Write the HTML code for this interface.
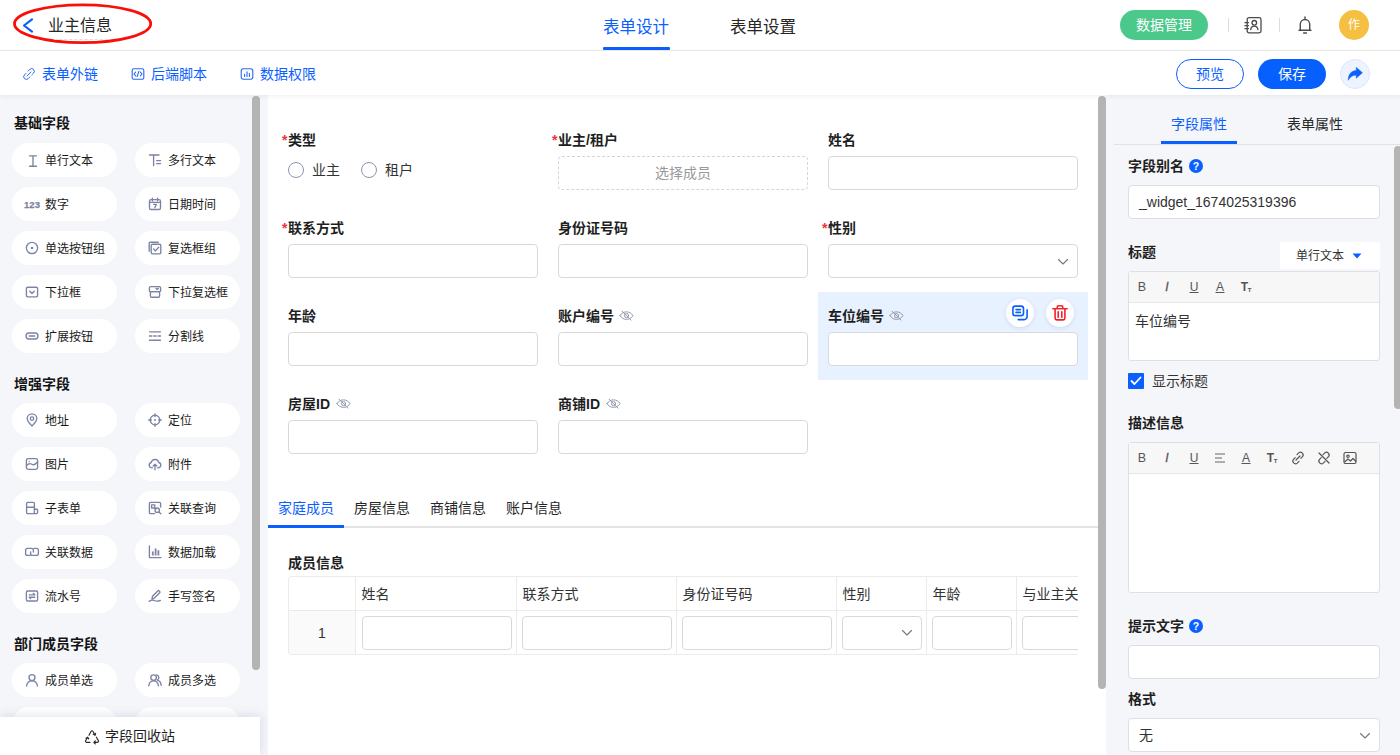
<!DOCTYPE html>
<html lang="zh-CN">
<head>
<meta charset="utf-8">
<title>业主信息 - 表单设计</title>
<style>
*{box-sizing:border-box;margin:0;padding:0}
html,body{width:1400px;height:755px;overflow:hidden;background:#fff}
body{font-family:"Liberation Sans","Noto Sans CJK SC",sans-serif;font-size:14px;color:#1f1f1f;position:relative}
.abs{position:absolute}
svg{display:block;overflow:visible}
/* header */
#hdr{position:absolute;left:0;top:0;width:1400px;height:51px;background:#fff;border-bottom:1px solid #ececec}
#sub{position:absolute;left:0;top:51px;width:1400px;height:44px;background:#fff;z-index:5;box-shadow:0 1px 5px rgba(0,0,0,.07)}
.t{position:absolute;white-space:nowrap;line-height:20px;height:20px}
.blue{color:#0b5fff}
/* left */
#left{position:absolute;left:0;top:95px;width:268px;height:660px;background:#f5f6fa;overflow:hidden}
.sec{position:absolute;left:14px;margin-top:0.8px;font-weight:bold;font-size:14px;line-height:20px;color:#141414}
.pill{position:absolute;width:105px;height:34px;border-radius:17px;background:#fff;font-size:12px;line-height:34px;color:#1a1a1a;white-space:nowrap}
.pill span{position:absolute;left:33px;top:1px}
.pill svg{position:absolute;left:13px;top:10px}
.c1{left:12px}.c2{left:135px}
.thumb{position:absolute;width:8px;background:#b4b4b4;border-radius:4px}
/* canvas */
#cv{position:absolute;left:268px;top:95px;width:838px;height:660px;background:#fff;overflow:hidden}
.lbl{position:absolute;font-weight:bold;font-size:14px;line-height:20px;height:20px;white-space:nowrap;color:#1f1f1f}
.req{position:absolute;color:#e8323c;font-size:14px;line-height:20px;font-weight:bold}
.inp{position:absolute;height:34px;width:250px;border:1px solid #d9d9d9;border-radius:4px;background:#fff}
/* right */
#right{position:absolute;left:1106px;top:95px;width:294px;height:660px;background:#f5f6fa;overflow:hidden}
</style>
</head>
<body>
<div id="hdr">
<svg class="abs" style="left:0;top:0" width="200" height="50"><polyline points="32,19.4 24,25.5 32,31.6" fill="none" stroke="#0b5fff" stroke-width="2.2" stroke-linecap="round" stroke-linejoin="round"/><ellipse cx="82.6" cy="23.7" rx="68.1" ry="18.9" fill="none" stroke="#f90f0a" stroke-width="2.8"/></svg>
<div class="abs" style="left:54px;top:39px;width:54px;height:0;border-top:1px dashed #dedede"></div>
<div class="t" style="left:48px;top:16px;font-size:16px;color:#262626">业主信息</div>
<div class="t blue" style="left:603px;top:16.5px;font-size:16.5px">表单设计</div>
<div class="abs" style="left:603px;top:47px;width:67px;height:3px;background:#0b5fff;border-radius:1px"></div>
<div class="t" style="left:730px;top:16.5px;font-size:16.5px;color:#262626">表单设置</div>
<div class="abs" style="left:1120px;top:10px;width:88px;height:30px;border-radius:15px;background:#4bc98b;color:#fff;font-size:14px;line-height:30px;text-align:center">数据管理</div>
<div class="abs" style="left:1228px;top:18px;width:1px;height:14px;background:#dcdcdc"></div>
<div class="abs" style="left:1279px;top:18px;width:1px;height:14px;background:#dcdcdc"></div>
<svg class="abs" style="left:1244px;top:16px" width="20" height="20" viewBox="0 0 20 20" fill="none" stroke="#4d4a4a" stroke-width="1.3" stroke-linecap="round" stroke-linejoin="round"><rect x="3.2" y="1.7" width="13.8" height="15.2" rx="1.8"/><path d="M1 6.7h3.4M1 9.7h3.4M1 12.7h3.4"/><circle cx="10.3" cy="6.8" r="2.3"/><path d="M6.7 13.7c.3-2.3 1.7-3.5 3.6-3.5s3.3 1.2 3.6 3.5"/></svg>
<svg class="abs" style="left:1295px;top:15px" width="20" height="20" viewBox="0 0 20 20" fill="none" stroke="#4d4a4a" stroke-width="1.4" stroke-linecap="round" stroke-linejoin="round"><path d="M4 15.2h12M5.3 15V9.2a4.7 4.7 0 0 1 9.4 0V15M10 2v2.3M8.6 18h2.8"/></svg>
<div class="abs" style="left:1339px;top:10px;width:30px;height:30px;border-radius:15px;background:#f5bf42;color:#fff;font-size:12px;line-height:30px;text-align:center">作</div>
</div>
<div id="sub">
<svg class="abs" style="left:22px;top:16px" width="14" height="14" viewBox="0 0 14 14" fill="none" stroke="#2468f2" stroke-width="1" stroke-linecap="round"><path d="M6.1 4.1l1.7-1.7a2.6 2.6 0 0 1 3.7 3.7L9.8 7.8M7.9 9.9l-1.7 1.7a2.6 2.6 0 0 1-3.7-3.7l1.7-1.7M5 9l4-4"/></svg>
<div class="t blue" style="left:42px;top:13px">表单外链</div>
<svg class="abs" style="left:131px;top:16px" width="14" height="14" viewBox="0 0 14 14" fill="none" stroke="#2468f2" stroke-width="1.1" stroke-linejoin="round" stroke-linecap="round"><rect x="1.2" y="1.7" width="11.6" height="10.6" rx="1.5"/><path d="M4.6 5.2L3 7l1.6 1.8M9.4 5.2L11 7 9.4 8.8M7.9 4.3L6.1 9.7"/></svg>
<div class="t blue" style="left:151px;top:13px">后端脚本</div>
<svg class="abs" style="left:240px;top:16px" width="14" height="14" viewBox="0 0 14 14" fill="none" stroke="#2468f2" stroke-width="1.1" stroke-linejoin="round" stroke-linecap="round"><rect x="1.2" y="1.7" width="11.6" height="10.6" rx="2.2"/><path d="M4.6 9.5V7.3M7 9.5V4.8M9.4 9.5V6.2"/></svg>
<div class="t blue" style="left:260px;top:13px">数据权限</div>
<div class="abs" style="left:1176px;top:8px;width:68px;height:30px;border-radius:15px;border:1px solid #0b5fff;color:#0b5fff;font-size:14px;line-height:28px;text-align:center;background:#fff">预览</div>
<div class="abs" style="left:1258px;top:8px;width:68px;height:30px;border-radius:15px;background:#0560fd;color:#fff;font-size:14px;line-height:30px;text-align:center">保存</div>
<div class="abs" style="left:1340px;top:8px;width:30px;height:30px;border-radius:15px;background:#edf3ff;border:1px solid #dbe6fd"></div>
<svg class="abs" style="left:1347px;top:16px" width="16" height="14" viewBox="0 0 16 14"><path d="M9.2 .3l6.3 5.5-6.3 5.5V8.2C5.8 8.1 3.3 9.6 1.3 13.3 1.1 7.2 4.3 3.7 9.2 3.4z" fill="#0b5fff" stroke="#0b5fff" stroke-width=".4" stroke-linejoin="round"/></svg>
</div>
<div id="left">
<div class="sec" style="top:17px">基础字段</div>
<div class="pill c1" style="top:48px"><svg width="14" height="14" viewBox="0 0 14 14" fill="none" stroke="#7c83a3" stroke-width="1.35" stroke-linecap="round" stroke-linejoin="round" style="left:14px;top:11px"><path d="M3.5 1.8h7M3.5 12.2h7M7 1.8v10.4"/></svg><span>单行文本</span></div>
<div class="pill c2" style="top:48px"><svg width="14" height="14" viewBox="0 0 14 14" fill="none" stroke="#7c83a3" stroke-width="1.35" stroke-linecap="round" stroke-linejoin="round"><path d="M1.5 2h9.5M5.6 2v10.5M8.6 7.6h4M8.6 10.6h4"/></svg><span>多行文本</span></div>
<div class="pill c1" style="top:92px"><svg width="18" height="14" viewBox="0 0 18 14" style="left:10.5px;top:10.5px"><text x="9" y="10.3" text-anchor="middle" font-family="Liberation Sans, sans-serif" font-weight="bold" font-size="9.5" fill="#7c83a3" stroke="#7c83a3" stroke-width="0.25">123</text></svg><span>数字</span></div>
<div class="pill c2" style="top:92px"><svg width="14" height="14" viewBox="0 0 14 14" fill="none" stroke="#7c83a3" stroke-width="1.35" stroke-linecap="round" stroke-linejoin="round"><rect x="1.5" y="2.6" width="11" height="9.9" rx="1.6"/><path d="M4.4 1.2v2.6M9.6 1.2v2.6M1.5 5.3h11M5.6 7.3h2.8l-1.6 3.4"/></svg><span>日期时间</span></div>
<div class="pill c1" style="top:136px"><svg width="14" height="14" viewBox="0 0 14 14" fill="none" stroke="#7c83a3" stroke-width="1.35" stroke-linecap="round" stroke-linejoin="round"><circle cx="7" cy="7" r="5.6"/><circle cx="7" cy="7" r="1.3" fill="#7c83a3" stroke="none"/></svg><span>单选按钮组</span></div>
<div class="pill c2" style="top:136px"><svg width="14" height="14" viewBox="0 0 14 14" fill="none" stroke="#7c83a3" stroke-width="1.35" stroke-linecap="round" stroke-linejoin="round"><rect x="3.2" y="3.2" width="9.6" height="9.6" rx="1.2"/><path d="M1.2 10.2V2.2a1 1 0 0 1 1-1h8M5.6 8l1.9 1.9 3.2-3.7"/></svg><span>复选框组</span></div>
<div class="pill c1" style="top:180px"><svg width="14" height="14" viewBox="0 0 14 14" fill="none" stroke="#7c83a3" stroke-width="1.35" stroke-linecap="round" stroke-linejoin="round"><rect x="1.4" y="2.2" width="11.2" height="9.6" rx="1.4"/><path d="M4.8 6.2L7 8.4l2.2-2.2"/></svg><span>下拉框</span></div>
<div class="pill c2" style="top:180px"><svg width="14" height="14" viewBox="0 0 14 14" fill="none" stroke="#7c83a3" stroke-width="1.35" stroke-linecap="round" stroke-linejoin="round"><rect x="1.4" y="1.6" width="11.2" height="5" rx="1.2"/><rect x="2.4" y="6.6" width="9.2" height="5.6" rx="1.2"/><path d="M8 3.2l1.2 1.2 1.2-1.2"/></svg><span>下拉复选框</span></div>
<div class="pill c1" style="top:224px"><svg width="14" height="14" viewBox="0 0 14 14" fill="none" stroke="#7c83a3" stroke-width="1.35" stroke-linecap="round" stroke-linejoin="round"><rect x="1" y="4" width="12" height="6" rx="3"/><path d="M4.2 7h5.6"/></svg><span>扩展按钮</span></div>
<div class="pill c2" style="top:224px"><svg width="14" height="14" viewBox="0 0 14 14" fill="none" stroke="#7c83a3" stroke-width="1.35" stroke-linecap="round" stroke-linejoin="round"><path d="M1.5 2.8h11M1.5 11.2h11M1.5 7h2.4M5.8 7h2.4M10.1 7h2.4"/></svg><span>分割线</span></div>
<div class="sec" style="top:277.9px">增强字段</div>
<div class="pill c1" style="top:308px"><svg width="14" height="14" viewBox="0 0 14 14" fill="none" stroke="#7c83a3" stroke-width="1.35" stroke-linecap="round" stroke-linejoin="round"><path d="M7 13C4.2 10.3 2.2 8 2.2 5.6a4.8 4.8 0 0 1 9.6 0C11.8 8 9.8 10.3 7 13z"/><circle cx="7" cy="5.6" r="1.7"/></svg><span>地址</span></div>
<div class="pill c2" style="top:308px"><svg width="14" height="14" viewBox="0 0 14 14" fill="none" stroke="#7c83a3" stroke-width="1.35" stroke-linecap="round" stroke-linejoin="round"><circle cx="7" cy="7" r="4.8"/><path d="M7 .8v2.6M7 10.6v2.6M.8 7h2.6M10.6 7h2.6"/><circle cx="7" cy="7" r="1" fill="#7c83a3" stroke="none"/></svg><span>定位</span></div>
<div class="pill c1" style="top:352px"><svg width="14" height="14" viewBox="0 0 14 14" fill="none" stroke="#7c83a3" stroke-width="1.35" stroke-linecap="round" stroke-linejoin="round"><rect x="1.4" y="1.6" width="11.2" height="10.8" rx="1.8"/><path d="M1.6 8.6c2-2.4 3.6-2.4 5.2-1.4s3.6.4 5.6-2.2M4.2 4.6h.1"/></svg><span>图片</span></div>
<div class="pill c2" style="top:352px"><svg width="14" height="14" viewBox="0 0 14 14" fill="none" stroke="#7c83a3" stroke-width="1.35" stroke-linecap="round" stroke-linejoin="round"><path d="M4.4 10.8H3.6A2.7 2.7 0 0 1 3.2 5.5a3.9 3.9 0 0 1 7.6 0 2.7 2.7 0 0 1-.4 5.3H9.6M7 12.8V7.4M5.2 9.1L7 7.3l1.8 1.8"/></svg><span>附件</span></div>
<div class="pill c1" style="top:396px"><svg width="14" height="14" viewBox="0 0 14 14" fill="none" stroke="#7c83a3" stroke-width="1.35" stroke-linecap="round" stroke-linejoin="round"><rect x="1.6" y="1.4" width="7.8" height="11.2" rx="1.2"/><path d="M1.6 6.2h7.8M9.4 8.2h2.2a1 1 0 0 1 1 1v2.4a1 1 0 0 1-1 1H9.4"/></svg><span>子表单</span></div>
<div class="pill c2" style="top:396px"><svg width="14" height="14" viewBox="0 0 14 14" fill="none" stroke="#7c83a3" stroke-width="1.35" stroke-linecap="round" stroke-linejoin="round"><path d="M12.6 6V2.6a1.2 1.2 0 0 0-1.2-1.2H2.6a1.2 1.2 0 0 0-1.2 1.2v8.8a1.2 1.2 0 0 0 1.2 1.2h4"/><rect x="3.6" y="3.8" width="3.2" height="3.2"/><circle cx="9.2" cy="9.2" r="2.2"/><path d="M10.9 10.9l1.9 1.9M6.8 7l1 1"/></svg><span>关联查询</span></div>
<div class="pill c1" style="top:440px"><svg width="14" height="14" viewBox="0 0 14 14" fill="none" stroke="#7c83a3" stroke-width="1.35" stroke-linecap="round" stroke-linejoin="round"><path d="M8.4 7V5.4a2 2 0 0 0-2-2H2.6a2 2 0 0 0-2 2v3a2 2 0 0 0 2 2H5"/><path d="M5.6 6.8v1.6a2 2 0 0 0 2 2h3.8a2 2 0 0 0 2-2v-3a2 2 0 0 0-2-2H9"/></svg><span>关联数据</span></div>
<div class="pill c2" style="top:440px"><svg width="14" height="14" viewBox="0 0 14 14" fill="none" stroke="#7c83a3" stroke-width="1.35" stroke-linecap="round" stroke-linejoin="round"><path d="M1.4 1v11.6h11.6"/><path d="M4.8 10.4V6.6M7.6 10.4V3.4M10.4 10.4V5.2" stroke-width="1.8" stroke-linecap="butt"/></svg><span>数据加载</span></div>
<div class="pill c1" style="top:484px"><svg width="14" height="14" viewBox="0 0 14 14" fill="none" stroke="#7c83a3" stroke-width="1.35" stroke-linecap="round" stroke-linejoin="round"><rect x="1.4" y="2" width="11.2" height="10" rx="1.2"/><path d="M4.2 5.8h5.6l-1.4-1.4M9.8 8.2H4.2l1.4 1.4"/></svg><span>流水号</span></div>
<div class="pill c2" style="top:484px"><svg width="14" height="14" viewBox="0 0 14 14" fill="none" stroke="#7c83a3" stroke-width="1.35" stroke-linecap="round" stroke-linejoin="round"><path d="M4 9.6l.5-2.4 5.3-5.3a1 1 0 0 1 1.4 0l.5.5a1 1 0 0 1 0 1.4L6.4 9.1zM1.2 12.4c2-1.6 3.4-1.8 5-.9s3.6 1 6.2-.1"/></svg><span>手写签名</span></div>
<div class="sec" style="top:538px">部门成员字段</div>
<div class="pill c1" style="top:568px"><svg width="14" height="14" viewBox="0 0 14 14" fill="none" stroke="#7c83a3" stroke-width="1.35" stroke-linecap="round" stroke-linejoin="round"><circle cx="7" cy="4.6" r="3"/><path d="M1.6 13c.3-3.2 2.4-5.2 5.4-5.2s5.1 2 5.4 5.2"/></svg><span>成员单选</span></div>
<div class="pill c2" style="top:568px"><svg width="14" height="14" viewBox="0 0 14 14" fill="none" stroke="#7c83a3" stroke-width="1.35" stroke-linecap="round" stroke-linejoin="round"><circle cx="5.6" cy="4.6" r="2.8"/><path d="M.8 12.8c.3-3 2.1-5 4.8-5s4.5 2 4.8 5M8.6 1.9a2.8 2.8 0 0 1 .6 5.3c2.2.4 3.7 2.2 4 5.2"/></svg><span>成员多选</span></div>
<div class="pill c1" style="top:612px"></div>
<div class="pill c2" style="top:612px"></div>
<div class="thumb" style="left:252px;top:1px;height:574px"></div>
<div class="abs" id="recycle" style="left:0;top:622px;width:260px;height:38px;background:#fff;box-shadow:0 -3px 10px rgba(40,50,90,.08),3px 0 8px rgba(40,50,90,.05)"><svg class="abs" style="left:84px;top:11.5px" width="16" height="15" viewBox="0 0 16 15" fill="none" stroke="#2b2b2b" stroke-width="1.2" stroke-linecap="round" stroke-linejoin="round"><path d="M5 6.2L7.1 2.3a1 1 0 0 1 1.8 0L11 6.2M12.4 8.2l2 3.6a1 1 0 0 1-.9 1.5H10M6 13.3H2.5a1 1 0 0 1-.9-1.5l2-3.6M9.3 5.3l1.8 1 .5-2M11.3 11.8L9.8 13.3l1.5 1.5M2 9.2l1.7-1 1 1.7"/></svg><div class="t" style="left:105px;top:9px;font-size:14px;color:#1f1f1f">字段回收站</div></div>
</div>
<div id="cv">
<div class="abs" style="left:550px;top:197px;width:270px;height:88px;background:#e8f1ff"></div>
<div class="req" style="left:14px;top:35px">*</div>
<div class="lbl" style="left:20px;top:35px">类型</div>
<div class="abs" style="left:20px;top:67px;width:16px;height:16px;border-radius:8px;border:1px solid #8f93ab;background:#fff"></div>
<div class="t" style="left:44px;top:65px;font-size:14px;color:#333">业主</div>
<div class="abs" style="left:93px;top:67px;width:16px;height:16px;border-radius:8px;border:1px solid #8f93ab;background:#fff"></div>
<div class="t" style="left:117px;top:65px;font-size:14px;color:#333">租户</div>
<div class="req" style="left:284px;top:35px">*</div>
<div class="lbl" style="left:290px;top:35px">业主/租户</div>
<div class="abs" style="left:290px;top:61px;width:250px;height:34px;border:1px dashed #d6d6d6;border-radius:4px;color:#999;font-size:14px;line-height:32px;text-align:center">选择成员</div>
<div class="lbl" style="left:560px;top:35px">姓名</div>
<div class="inp" style="left:560px;top:61px"></div>
<div class="req" style="left:14px;top:123px">*</div>
<div class="lbl" style="left:20px;top:123px">联系方式</div>
<div class="inp" style="left:20px;top:149px"></div>
<div class="lbl" style="left:290px;top:123px">身份证号码</div>
<div class="inp" style="left:290px;top:149px"></div>
<div class="req" style="left:554px;top:123px">*</div>
<div class="lbl" style="left:560px;top:123px">性别</div>
<div class="inp" style="left:560px;top:149px"><svg class="abs" style="left:228px;top:13px" width="12" height="8" viewBox="0 0 12 8" fill="none" stroke="#7a7a7a" stroke-width="1.15" stroke-linecap="round" stroke-linejoin="round"><path d="M1.5 1.5L6 6l4.5-4.5"/></svg></div>
<div class="lbl" style="left:20px;top:211px">年龄</div>
<div class="inp" style="left:20px;top:237px"></div>
<div class="lbl" style="left:290px;top:211px">账户编号</div>
<svg class="abs" style="left:350.5px;top:215px" width="15" height="11.25" viewBox="0 0 16 12" fill="none" stroke="#9196aa" stroke-width="1.05" stroke-linecap="round"><path d="M1 6c1.8-2.7 4.2-4 7-4s5.2 1.3 7 4c-1.8 2.7-4.2 4-7 4S2.8 8.7 1 6z"/><circle cx="8" cy="6" r="2.2"/><path d="M3.2 1.2l9.6 9.6"/></svg>
<div class="inp" style="left:290px;top:237px"></div>
<div class="lbl" style="left:560px;top:211px">车位编号</div>
<svg class="abs" style="left:620.5px;top:215px" width="15" height="11.25" viewBox="0 0 16 12" fill="none" stroke="#9196aa" stroke-width="1.05" stroke-linecap="round"><path d="M1 6c1.8-2.7 4.2-4 7-4s5.2 1.3 7 4c-1.8 2.7-4.2 4-7 4S2.8 8.7 1 6z"/><circle cx="8" cy="6" r="2.2"/><path d="M3.2 1.2l9.6 9.6"/></svg>
<div class="inp" style="left:560px;top:237px"></div>
<div class="lbl" style="left:20px;top:299px">房屋ID</div>
<svg class="abs" style="left:67.5px;top:303px" width="15" height="11.25" viewBox="0 0 16 12" fill="none" stroke="#9196aa" stroke-width="1.05" stroke-linecap="round"><path d="M1 6c1.8-2.7 4.2-4 7-4s5.2 1.3 7 4c-1.8 2.7-4.2 4-7 4S2.8 8.7 1 6z"/><circle cx="8" cy="6" r="2.2"/><path d="M3.2 1.2l9.6 9.6"/></svg>
<div class="inp" style="left:20px;top:325px"></div>
<div class="lbl" style="left:290px;top:299px">商铺ID</div>
<svg class="abs" style="left:337.5px;top:303px" width="15" height="11.25" viewBox="0 0 16 12" fill="none" stroke="#9196aa" stroke-width="1.05" stroke-linecap="round"><path d="M1 6c1.8-2.7 4.2-4 7-4s5.2 1.3 7 4c-1.8 2.7-4.2 4-7 4S2.8 8.7 1 6z"/><circle cx="8" cy="6" r="2.2"/><path d="M3.2 1.2l9.6 9.6"/></svg>
<div class="inp" style="left:290px;top:325px"></div>
<div class="abs" style="left:738px;top:204px;width:28px;height:28px;border-radius:14px;background:#fff;box-shadow:0 1px 4px rgba(30,60,140,.12)"><svg class="abs" style="left:6px;top:6px" width="16" height="16" viewBox="0 0 16 16" fill="none" stroke="#0b5fff" stroke-width="1.6" stroke-linecap="round" stroke-linejoin="round"><rect x="0.9" y="1.1" width="10.6" height="9.5" rx="2.4"/><path d="M4 4.6h4.4M4 7.4h4.4M15.1 4.8v6.8a3 3 0 0 1-3 3H6.2"/></svg></div>
<div class="abs" style="left:778px;top:204px;width:28px;height:28px;border-radius:14px;background:#fff;box-shadow:0 1px 4px rgba(30,60,140,.12)"><svg class="abs" style="left:6px;top:6px" width="16" height="16" viewBox="0 0 16 16" fill="none" stroke="#f5222d" stroke-width="1.6" stroke-linecap="round" stroke-linejoin="round"><path d="M0.9 3.7h14.2M5.2 3.5V2.2a1.4 1.4 0 0 1 1.4-1.4h2.8a1.4 1.4 0 0 1 1.4 1.4v1.3M3.1 3.9v9.2a1.8 1.8 0 0 0 1.8 1.8h6.2a1.8 1.8 0 0 0 1.8-1.8V3.9M6.2 6.8v5.4M9.8 6.8v5.4"/></svg></div>
<div class="t blue" style="left:10px;top:403px;font-size:14px;">家庭成员</div>
<div class="t" style="left:86px;top:403px;font-size:14px;color:#262626">房屋信息</div>
<div class="t" style="left:162px;top:403px;font-size:14px;color:#262626">商铺信息</div>
<div class="t" style="left:238px;top:403px;font-size:14px;color:#262626">账户信息</div>
<div class="abs" style="left:0;top:431px;width:830px;height:2px;background:#e4e4e4"></div>
<div class="abs" style="left:0;top:430px;width:76px;height:3px;background:#0b5fff"></div>
<div class="lbl" style="left:20px;top:458px">成员信息</div>
<div class="abs" id="tbl" style="border-radius:4px 0 0 4px;left:20px;top:481px;width:790px;height:79px;overflow:hidden;border-top:1px solid #ebebeb;border-left:1px solid #ebebeb;border-bottom:1px solid #ebebeb">
<div class="abs" style="left:0px;top:0;width:67px;height:34px;border-right:1px solid #ebebeb;border-bottom:1px solid #ebebeb;font-size:14px;line-height:34px;padding-left:5.5px;color:#333;white-space:nowrap;overflow:hidden"></div>
<div class="abs" style="left:0px;top:34px;width:67px;height:44px;border-right:1px solid #ebebeb;background:#fafafa;font-size:14px;line-height:44px;text-align:center;color:#333">1</div>
<div class="abs" style="left:67px;top:0;width:161px;height:34px;border-right:1px solid #ebebeb;border-bottom:1px solid #ebebeb;font-size:14px;line-height:34px;padding-left:5.5px;color:#333;white-space:nowrap;overflow:hidden">姓名</div>
<div class="abs" style="left:67px;top:34px;width:161px;height:44px;border-right:1px solid #ebebeb"><div class="inp" style="left:6px;top:5px;width:150px;height:34px"></div></div>
<div class="abs" style="left:228px;top:0;width:160px;height:34px;border-right:1px solid #ebebeb;border-bottom:1px solid #ebebeb;font-size:14px;line-height:34px;padding-left:5.5px;color:#333;white-space:nowrap;overflow:hidden">联系方式</div>
<div class="abs" style="left:228px;top:34px;width:160px;height:44px;border-right:1px solid #ebebeb"><div class="inp" style="left:5px;top:5px;width:150px;height:34px"></div></div>
<div class="abs" style="left:388px;top:0;width:160px;height:34px;border-right:1px solid #ebebeb;border-bottom:1px solid #ebebeb;font-size:14px;line-height:34px;padding-left:5.5px;color:#333;white-space:nowrap;overflow:hidden">身份证号码</div>
<div class="abs" style="left:388px;top:34px;width:160px;height:44px;border-right:1px solid #ebebeb"><div class="inp" style="left:5px;top:5px;width:150px;height:34px"></div></div>
<div class="abs" style="left:548px;top:0;width:90px;height:34px;border-right:1px solid #ebebeb;border-bottom:1px solid #ebebeb;font-size:14px;line-height:34px;padding-left:5.5px;color:#333;white-space:nowrap;overflow:hidden">性别</div>
<div class="abs" style="left:548px;top:34px;width:90px;height:44px;border-right:1px solid #ebebeb"><div class="inp" style="left:5px;top:5px;width:80px;height:34px"><svg class="abs" style="left:58px;top:12px" width="12" height="8" viewBox="0 0 12 8" fill="none" stroke="#7a7a7a" stroke-width="1.15" stroke-linecap="round" stroke-linejoin="round"><path d="M1.5 1.5L6 6l4.5-4.500"/></svg></div></div>
<div class="abs" style="left:638px;top:0;width:90px;height:34px;border-right:1px solid #ebebeb;border-bottom:1px solid #ebebeb;font-size:14px;line-height:34px;padding-left:5.5px;color:#333;white-space:nowrap;overflow:hidden">年龄</div>
<div class="abs" style="left:638px;top:34px;width:90px;height:44px;border-right:1px solid #ebebeb"><div class="inp" style="left:5px;top:5px;width:80px;height:34px"></div></div>
<div class="abs" style="left:728px;top:0;width:120px;height:34px;border-right:1px solid #ebebeb;border-bottom:1px solid #ebebeb;font-size:14px;line-height:34px;padding-left:5.5px;color:#333;white-space:nowrap;overflow:hidden">与业主关系</div>
<div class="abs" style="left:728px;top:34px;width:120px;height:44px;border-right:1px solid #ebebeb"><div class="inp" style="left:5px;top:5px;width:110px;height:34px"></div></div>
</div>
<div class="thumb" style="left:830px;top:1px;height:593px"></div>
</div>
<div id="right">
<div class="t blue" style="left:65px;top:19px;font-size:14px">字段属性</div>
<div class="t" style="left:181px;top:19px;font-size:14px;color:#262626">表单属性</div>
<div class="abs" style="left:8px;top:49px;width:290px;height:1px;background:#e2e2e2"></div>
<div class="abs" style="left:55px;top:46px;width:76px;height:3px;background:#0b5fff"></div>
<div class="lbl" style="left:22px;top:61px">字段别名</div>
<svg class="abs" style="left:83px;top:64px" width="14" height="14" viewBox="0 0 14 14"><circle cx="7" cy="7" r="7" fill="#0b5fff"/><text x="7" y="10.6" text-anchor="middle" font-family="Liberation Sans, sans-serif" font-weight="bold" font-size="10.5" fill="#fff">?</text></svg>
<div class="inp" style="left:22px;top:90px;width:252px;height:34px;font-size:14px;line-height:32px;padding-left:10px;color:#333;border-color:#dcdfe6">_widget_1674025319396</div>
<div class="lbl" style="left:22px;top:147px">标题</div>
<div class="abs" style="left:174px;top:147px;width:100px;height:27px;background:#fff;border-radius:2px;font-size:12px;line-height:29px;color:#333;padding-left:16px">单行文本<svg class="abs" style="left:72px;top:11px" width="10" height="6" viewBox="0 0 10 6"><path d="M0.5 0.5h9L5 5.5z" fill="#0b5fff"/></svg></div>
<div class="abs" style="left:22px;top:176px;width:252px;height:90px;border:1px solid #dcdfe6;border-radius:3px;background:#fff"><div class="abs" style="left:0;top:0;width:250px;height:31px;background:#f7f7f7;border-bottom:1px solid #e6e6e6"></div><div class="t" style="left:6px;top:39px;font-size:14px;color:#333">车位编号</div></div>
<svg class="abs" style="left:28px;top:184px" width="16" height="16" viewBox="0 0 16 16"><text x="8" y="12" text-anchor="middle" font-family="Liberation Sans, sans-serif" font-size="12.5" fill="#555">B</text></svg>
<svg class="abs" style="left:53px;top:184px" width="16" height="16" viewBox="0 0 16 16"><text x="8" y="12" text-anchor="middle" font-family="Liberation Sans, sans-serif" font-style="italic" font-size="12" fill="#555" stroke="#555" stroke-width=".3">I</text></svg>
<svg class="abs" style="left:80px;top:184px" width="16" height="16" viewBox="0 0 16 16"><text x="8" y="11.5" text-anchor="middle" font-family="Liberation Sans, sans-serif" font-size="12" fill="#555">U</text><path d="M3.5 13.5h9" stroke="#555" stroke-width="1"/></svg>
<svg class="abs" style="left:106px;top:184px" width="16" height="16" viewBox="0 0 16 16"><text x="8" y="11.5" text-anchor="middle" font-family="Liberation Sans, sans-serif" font-size="12" fill="#555">A</text><path d="M3.5 13.5h9" stroke="#555" stroke-width="1"/></svg>
<svg class="abs" style="left:132px;top:184px" width="16" height="16" viewBox="0 0 16 16"><text x="6.5" y="12" text-anchor="middle" font-family="Liberation Sans, sans-serif" font-weight="bold" font-size="12" fill="#555">T</text><text x="11.6" y="12.5" text-anchor="middle" font-family="Liberation Sans, sans-serif" font-weight="bold" font-size="6" fill="#555">T</text></svg>
<div class="abs" style="left:22px;top:278px;width:16px;height:16px;border-radius:1px;background:#0b5fff"><svg class="abs" style="left:2px;top:3px" width="12" height="10" viewBox="0 0 12 10" fill="none" stroke="#fff" stroke-width="1.8" stroke-linecap="round" stroke-linejoin="round"><path d="M1.5 5l3 3 6-6.5"/></svg></div>
<div class="t" style="left:46px;top:276px;font-size:14px;color:#333">显示标题</div>
<div class="lbl" style="left:22px;top:318px">描述信息</div>
<div class="abs" style="left:22px;top:347px;width:252px;height:151px;border:1px solid #dcdfe6;border-radius:3px;background:#fff"><div class="abs" style="left:0;top:0;width:250px;height:31px;background:#f7f7f7;border-bottom:1px solid #e6e6e6"></div></div>
<svg class="abs" style="left:28px;top:355px" width="16" height="16" viewBox="0 0 16 16"><text x="8" y="12" text-anchor="middle" font-family="Liberation Sans, sans-serif" font-size="12.5" fill="#555">B</text></svg>
<svg class="abs" style="left:53px;top:355px" width="16" height="16" viewBox="0 0 16 16"><text x="8" y="12" text-anchor="middle" font-family="Liberation Sans, sans-serif" font-style="italic" font-size="12" fill="#555" stroke="#555" stroke-width=".3">I</text></svg>
<svg class="abs" style="left:80px;top:355px" width="16" height="16" viewBox="0 0 16 16"><text x="8" y="11.5" text-anchor="middle" font-family="Liberation Sans, sans-serif" font-size="12" fill="#555">U</text><path d="M3.5 13.5h9" stroke="#555" stroke-width="1"/></svg>
<svg class="abs" style="left:106px;top:355px" width="16" height="16" viewBox="0 0 16 16"><path d="M3 4h10M3 8h7M3 12h10" stroke="#666" stroke-width="1.1" fill="none"/></svg>
<svg class="abs" style="left:132px;top:355px" width="16" height="16" viewBox="0 0 16 16"><text x="8" y="11.5" text-anchor="middle" font-family="Liberation Sans, sans-serif" font-size="12" fill="#555">A</text><path d="M3.5 13.5h9" stroke="#555" stroke-width="1"/></svg>
<svg class="abs" style="left:158px;top:355px" width="16" height="16" viewBox="0 0 16 16"><text x="6.5" y="12" text-anchor="middle" font-family="Liberation Sans, sans-serif" font-weight="bold" font-size="12" fill="#555">T</text><text x="11.6" y="12.5" text-anchor="middle" font-family="Liberation Sans, sans-serif" font-weight="bold" font-size="6" fill="#555">T</text></svg>
<svg class="abs" style="left:184px;top:355px" width="16" height="16" viewBox="0 0 16 16"><g fill="none" stroke="#555" stroke-width="1.2" stroke-linecap="round"><path d="M7 4.6l1.7-1.7a2.7 2.7 0 0 1 3.8 3.8L10.8 8.4M9 11.4l-1.7 1.7a2.7 2.7 0 0 1-3.8-3.8L5.2 7.6M6 10l4-4"/></g></svg>
<svg class="abs" style="left:210px;top:355px" width="16" height="16" viewBox="0 0 16 16"><g fill="none" stroke="#555" stroke-width="1.2" stroke-linecap="round"><path d="M7 4.6l1.7-1.7a2.7 2.7 0 0 1 3.8 3.8L10.8 8.4M9 11.4l-1.7 1.7a2.7 2.7 0 0 1-3.8-3.8L5.2 7.6M3 3l10 10"/></g></svg>
<svg class="abs" style="left:236px;top:355px" width="16" height="16" viewBox="0 0 16 16"><g fill="none" stroke="#555" stroke-width="1.2" stroke-linejoin="round"><rect x="2" y="2.5" width="12" height="11" rx="1.5"/><circle cx="6" cy="6.3" r="1.2"/><path d="M2.5 12l3.5-3 2.5 2 2.5-2.5 3 3"/></g></svg>
<div class="lbl" style="left:22px;top:521px">提示文字</div>
<svg class="abs" style="left:83px;top:524px" width="14" height="14" viewBox="0 0 14 14"><circle cx="7" cy="7" r="7" fill="#0b5fff"/><text x="7" y="10.6" text-anchor="middle" font-family="Liberation Sans, sans-serif" font-weight="bold" font-size="10.5" fill="#fff">?</text></svg>
<div class="inp" style="left:22px;top:550px;width:252px;height:34px;border-color:#dcdfe6"></div>
<div class="lbl" style="left:22px;top:594px">格式</div>
<div class="inp" style="left:22px;top:623px;width:252px;height:34px;font-size:14px;line-height:32px;padding-left:10px;color:#333;border-color:#dcdfe6">无<svg class="abs" style="left:230px;top:13px" width="12" height="8" viewBox="0 0 12 8" fill="none" stroke="#7a7a7a" stroke-width="1.15" stroke-linecap="round" stroke-linejoin="round"><path d="M1.5 1.5L6 6l4.5-4.5"/></svg></div>
<div class="thumb" style="left:288px;top:51px;height:263px"></div>
</div>
</body>
</html>
